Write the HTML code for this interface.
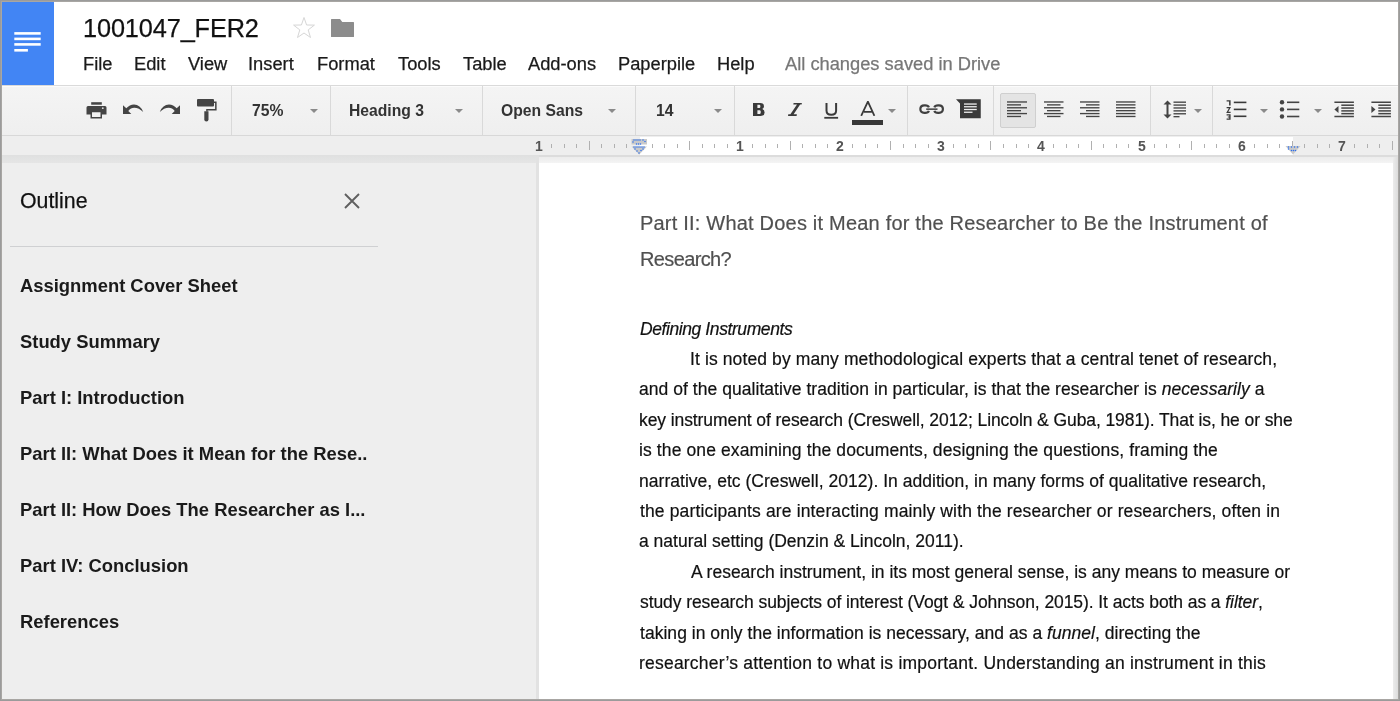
<!DOCTYPE html>
<html><head><meta charset="utf-8">
<style>
*{margin:0;padding:0;box-sizing:border-box}
html,body{width:1400px;height:701px;overflow:hidden;background:#9b9b9b;font-family:"Liberation Sans",sans-serif;position:relative}
.a{position:absolute}
.t{position:absolute;white-space:nowrap;line-height:normal;will-change:transform;-webkit-text-stroke:0.25px currentColor}
.dl{position:absolute;white-space:nowrap;line-height:normal;transform-origin:0 0;will-change:transform;-webkit-text-stroke:0.2px currentColor}
.menu{font-size:18.3px;color:#1a1a1a;top:52.8px}
.sep{position:absolute;top:86px;width:1px;height:49px;background:#d9d9d9}
.tb{will-change:transform;position:absolute;font-weight:bold;font-size:15.7px;color:#333;top:102px}
.arr{position:absolute;top:109px;width:0;height:0;border-left:4px solid transparent;border-right:4px solid transparent;border-top:4px solid #8a8a8a}
.oi{will-change:transform;position:absolute;left:20px;font-weight:bold;font-size:18.4px;color:#1a1a1a;white-space:nowrap}
.tk{position:absolute;width:1px;background:#b0b0b0}
.rn{will-change:transform;position:absolute;top:137.5px;font-size:14px;font-weight:bold;color:#555;width:20px;text-align:center}
</style></head><body>
<!-- frame -->
<div class="a" style="left:1px;top:1px;width:1398px;height:699px;background:#a8a6a3"></div>
<div class="a" style="left:2px;top:2px;width:1396px;height:697px;background:#fff;overflow:hidden"></div>

<!-- header -->
<div class="a" style="left:2px;top:2px;width:52px;height:83px;background:#4285f4">
 <svg width="52" height="83" class="a" style="left:0;top:0">
  <g fill="#fff">
   <rect x="12.3" y="30.1" width="26.4" height="2.6"/>
   <rect x="12.3" y="35.6" width="26.4" height="2.6"/>
   <rect x="12.3" y="41.1" width="26.4" height="2.6"/>
   <rect x="12.3" y="47" width="13.6" height="2.6"/>
  </g>
 </svg>
</div>
<div class="t" style="left:83px;top:14.3px;font-size:25.3px;letter-spacing:-0.12px;color:#111">1001047_FER2</div>
<svg class="a" style="left:292px;top:16px" width="24" height="24" viewBox="0 0 24 24">
 <path d="M12 1.5 L14.6 9 L22.4 9.1 L16.2 13.9 L18.5 21.5 L12 17 L5.5 21.5 L7.8 13.9 L1.6 9.1 L9.4 9 Z" fill="none" stroke="#d6d6d6" stroke-width="1"/>
</svg>
<svg class="a" style="left:331px;top:19px" width="23" height="18" viewBox="0 0 23 18">
 <path d="M0 0.6 Q0 0 0.6 0 L9 0 L11.3 2.9 L22.4 2.9 Q23 2.9 23 3.5 L23 17.4 Q23 18 22.4 18 L0.6 18 Q0 18 0 17.4 Z" fill="#8c8c8c"/>
</svg>
<div class="t menu" style="left:82.5px">File</div>
<div class="t menu" style="left:134px">Edit</div>
<div class="t menu" style="left:188px">View</div>
<div class="t menu" style="left:248px">Insert</div>
<div class="t menu" style="left:317px">Format</div>
<div class="t menu" style="left:398px">Tools</div>
<div class="t menu" style="left:463px">Table</div>
<div class="t menu" style="left:528px">Add-ons</div>
<div class="t menu" style="left:617.5px">Paperpile</div>
<div class="t menu" style="left:716.5px">Help</div>
<div class="t menu" style="left:785px;color:#777">All changes saved in Drive</div>

<!-- toolbar -->
<div class="a" style="left:2px;top:85px;width:1396px;height:1px;background:#dadada"></div>
<div class="a" style="left:2px;top:86px;width:1396px;height:1px;background:#fbfbfb"></div>
<div class="a" style="left:2px;top:87px;width:1396px;height:48px;background:linear-gradient(#f4f4f4,#efefef)"></div>
<div class="a" style="left:2px;top:135px;width:1396px;height:1px;background:#d8d8d8"></div>
<div class="sep" style="left:231px"></div>
<div class="sep" style="left:330px"></div>
<div class="sep" style="left:482px"></div>
<div class="sep" style="left:635px"></div>
<div class="sep" style="left:734px"></div>
<div class="sep" style="left:907px"></div>
<div class="sep" style="left:993px"></div>
<div class="sep" style="left:1150px"></div>
<div class="sep" style="left:1212px"></div>

<!-- print -->
<svg class="a" style="left:86px;top:101px" width="21" height="18" viewBox="0 0 21 18">
 <g fill="#444">
  <rect x="5.2" y="1.2" width="10.6" height="2.5"/>
  <path d="M2 5 L19 5 Q20.5 5 20.5 6.5 L20.5 13.5 L15.5 13.5 L15.5 10 L5.5 10 L5.5 13.5 L0.5 13.5 L0.5 6.5 Q0.5 5 2 5 Z"/>
  <path d="M4.5 9.5 L16 9.5 L16 17.5 L4.5 17.5 Z M6 11.3 L6 16 L14.5 16 L14.5 11.3 Z" fill-rule="evenodd"/>
 </g>
 <circle cx="16.8" cy="7.2" r="0.9" fill="#ddd"/>
</svg>
<!-- undo -->
<svg class="a" style="left:122px;top:103px" width="23" height="13" viewBox="0 0 23 13">
 <path d="M1 2.3 L1 11 L9.3 11 L6.3 8 Q8.8 4.7 12.2 4.7 Q17 4.7 21.2 9 Q18.3 1.5 12 1.5 Q7.6 1.5 4.3 5.3 Z" fill="#444"/>
</svg>
<!-- redo -->
<svg class="a" style="left:158px;top:103px" width="23" height="13" viewBox="0 0 23 13">
 <g transform="translate(23,0) scale(-1,1)">
 <path d="M1 2.3 L1 11 L9.3 11 L6.3 8 Q8.8 4.7 12.2 4.7 Q17 4.7 21.2 9 Q18.3 1.5 12 1.5 Q7.6 1.5 4.3 5.3 Z" fill="#444"/>
 </g>
</svg>
<!-- paint format -->
<svg class="a" style="left:196px;top:98px" width="22" height="24" viewBox="0 0 22 24">
 <g fill="#444">
  <rect x="1" y="1" width="17" height="7.5" rx="1"/>
  <path d="M17.5 3.6 L20.6 3.6 L20.6 12.4 L11.6 12.4 L11.6 13.5 L10.2 13.5 L10.2 11 L19.1 11 L19.1 5 L17.5 5 Z"/>
  <path d="M8.3 13.3 H12.5 V21.5 Q12.5 23.5 10.4 23.5 Q8.3 23.5 8.3 21.5 Z"/>
 </g>
</svg>

<div class="tb" style="left:252px">75%</div>
<div class="arr" style="left:309.5px"></div>
<div class="tb" style="left:349px">Heading 3</div>
<div class="arr" style="left:455px"></div>
<div class="tb" style="left:501px">Open Sans</div>
<div class="arr" style="left:607.5px"></div>
<div class="tb" style="left:656px">14</div>
<div class="arr" style="left:713.5px"></div>

<!-- B I U A -->
<svg class="a" style="left:752.9px;top:102.9px" width="12" height="13" viewBox="0 0 12 13">
 <path fill="#3a3a3a" fill-rule="evenodd" d="M0 0 H7.2 Q11 0 11 3.2 Q11 5.3 9.2 6.1 Q11.6 6.9 11.6 9.4 Q11.6 12.9 7.6 12.9 H0 Z M4.4 1.7 V4.9 H6.6 Q7.4 4.9 7.4 3.3 Q7.4 1.7 6.6 1.7 Z M4.4 7.2 V10.9 H6.8 Q7.8 10.9 7.8 9.05 Q7.8 7.2 6.8 7.2 Z"/>
</svg>
<svg class="a" style="left:787.9px;top:102.9px" width="14" height="13" viewBox="0 0 14 13">
 <path fill="#3a3a3a" d="M5.6 0 H13.9 L13.6 1.6 H12.1 L5.6 11.3 H8.9 L8.6 12.9 H0 L0.3 11.3 H2.4 L9.0 1.6 H5.3 Z"/>
</svg>
<svg class="a" style="left:824px;top:102px" width="15" height="18" viewBox="0 0 15 18">
 <path fill="none" stroke="#3a3a3a" stroke-width="2" d="M2.5 1 V8.5 Q2.5 12.8 7.3 12.8 Q12.1 12.8 12.1 8.5 V1"/>
 <rect x="0.3" y="14.9" width="13.8" height="1.8" fill="#3a3a3a"/>
</svg>
<svg class="a" style="left:860px;top:101px" width="16" height="15" viewBox="0 0 16 15">
 <path fill="none" stroke="#3a3a3a" stroke-width="1.8" d="M1.2 14.8 L7.9 0.6 L14.4 14.8 M4 10.9 H11.8"/>
</svg>
<div class="a" style="left:852.2px;top:120px;width:30.6px;height:5.4px;background:#383838"></div>
<div class="arr" style="left:888.2px"></div>
<!-- link -->
<svg class="a" style="left:919px;top:104px" width="26" height="11" viewBox="0 0 26 11">
 <g fill="none" stroke="#404040" stroke-width="2.2">
  <path d="M9.9 3.4 Q9.2 1.3 6.2 1.3 H5.3 Q1.35 1.3 1.35 5.1 Q1.35 8.8 5.3 8.8 H6.2 Q9.2 8.8 9.9 6.8"/>
  <path d="M15.35 3.4 Q16.05 1.3 19.05 1.3 H19.95 Q23.9 1.3 23.9 5.1 Q23.9 8.8 19.95 8.8 H19.05 Q16.05 8.8 15.35 6.8"/>
 </g>
 <rect x="7.2" y="4.4" width="11.3" height="1.5" fill="#404040"/>
</svg>
<!-- comment -->
<svg class="a" style="left:955px;top:98px" width="27" height="22" viewBox="0 0 27 22">
 <path d="M1 1.25 L25.75 1.25 L25.75 20.25 L5 20.25 L5 5.5 Z" fill="#3a3a3a"/>
 <g fill="#eee">
  <rect x="9" y="5.4" width="12.75" height="1.3"/>
  <rect x="9" y="8.1" width="12.75" height="1.3"/>
  <rect x="9" y="10.85" width="12.75" height="1.3"/>
  <rect x="9" y="13.6" width="8.5" height="1.3"/>
 </g>
</svg>

<!-- align pressed bg -->
<div class="a" style="left:999.5px;top:92.5px;width:36.5px;height:35.5px;background:#e4e4e4;border:1px solid #cfcfcf;border-radius:2px"></div>
<svg class="a" style="left:1006px;top:100px" width="140" height="20" viewBox="0 0 140 20">
 <g fill="#444">
  <!-- left -->
  <rect x="1" y="1.3" width="20" height="1.35"/><rect x="1" y="4.2" width="14" height="1.35"/>
  <rect x="1" y="7.1" width="20" height="1.35"/><rect x="1" y="10" width="14" height="1.35"/>
  <rect x="1" y="12.9" width="20" height="1.35"/><rect x="1" y="15.8" width="14" height="1.35"/>
  <!-- center -->
  <rect x="38" y="1.3" width="19.5" height="1.35"/><rect x="41" y="4.2" width="13.5" height="1.35"/>
  <rect x="38" y="7.1" width="19.5" height="1.35"/><rect x="41" y="10" width="13.5" height="1.35"/>
  <rect x="38" y="12.9" width="19.5" height="1.35"/><rect x="41" y="15.8" width="13.5" height="1.35"/>
  <!-- right -->
  <rect x="74" y="1.3" width="19.5" height="1.35"/><rect x="80" y="4.2" width="13.5" height="1.35"/>
  <rect x="74" y="7.1" width="19.5" height="1.35"/><rect x="80" y="10" width="13.5" height="1.35"/>
  <rect x="74" y="12.9" width="19.5" height="1.35"/><rect x="80" y="15.8" width="13.5" height="1.35"/>
  <!-- justify -->
  <rect x="110" y="1.3" width="19.5" height="1.35"/><rect x="110" y="4.2" width="19.5" height="1.35"/>
  <rect x="110" y="7.1" width="19.5" height="1.35"/><rect x="110" y="10" width="19.5" height="1.35"/>
  <rect x="110" y="12.9" width="19.5" height="1.35"/><rect x="110" y="15.8" width="19.5" height="1.35"/>
 </g>
</svg>
<!-- line spacing -->
<svg class="a" style="left:1162px;top:100px" width="26" height="20" viewBox="0 0 26 20">
 <g fill="#444">
  <path d="M5.5 0.5 L9.5 4.5 L6.5 4.5 L6.5 14.5 L9.5 14.5 L5.5 18.5 L1.5 14.5 L4.5 14.5 L4.5 4.5 L1.5 4.5 Z"/>
  <rect x="11.5" y="1.5" width="12.5" height="1.35"/><rect x="11.5" y="4.4" width="12.5" height="1.35"/>
  <rect x="11.5" y="7.3" width="12.5" height="1.35"/><rect x="11.5" y="10.2" width="12.5" height="1.35"/>
  <rect x="11.5" y="13.1" width="12.5" height="1.35"/><rect x="11.5" y="16" width="6" height="1.35"/>
 </g>
</svg>
<div class="arr" style="left:1194px"></div>
<!-- numbered list -->
<svg class="a" style="left:1226px;top:99px" width="22" height="22" viewBox="0 0 22 22">
 <g fill="#3a3a3a">
  <path d="M0.6 1.3 H4.6 V6.4 H3.1 V2.6 H0.6 Z"/>
  <path d="M0.6 8.7 H3.9 L1.3 13.3 H4.6" fill="none" stroke="#3a3a3a" stroke-width="1.3"/>
  <path d="M0.6 15.3 H4.6 V20.7 H0.6 V19.4 H3.2 V18.6 H1.8 V17.5 H3.2 V16.6 H0.6 Z"/>
  <rect x="7.8" y="2.6" width="12.6" height="1.6"/>
  <rect x="7.8" y="9.6" width="12.6" height="1.6"/>
  <rect x="7.8" y="16.5" width="12.6" height="1.6"/>
 </g>
</svg>
<div class="arr" style="left:1260px"></div>
<!-- bullet list -->
<svg class="a" style="left:1278px;top:99px" width="22" height="22" viewBox="0 0 22 22">
 <g fill="#444">
  <circle cx="4" cy="3.3" r="2.2"/><circle cx="4" cy="10.4" r="2.2"/><circle cx="4" cy="17.5" r="2.2"/>
  <rect x="9" y="2.5" width="12.3" height="1.6"/>
  <rect x="9" y="9.6" width="12.3" height="1.6"/>
  <rect x="9" y="16.7" width="12.3" height="1.6"/>
 </g>
</svg>
<div class="arr" style="left:1313.5px"></div>
<!-- decrease indent -->
<svg class="a" style="left:1333px;top:100px" width="22" height="20" viewBox="0 0 22 20">
 <g fill="#444">
  <rect x="1.4" y="1.5" width="19.5" height="1.5"/>
  <rect x="8.3" y="4.45" width="12.6" height="1.5"/><rect x="8.3" y="7.3" width="12.6" height="1.5"/>
  <rect x="8.3" y="10.15" width="12.6" height="1.5"/><rect x="8.3" y="12.9" width="12.6" height="1.5"/>
  <rect x="1.4" y="15.75" width="19.5" height="1.5"/>
  <path d="M1.4 9.5 L5.5 6 L5.5 13 Z"/>
 </g>
</svg>
<!-- increase indent -->
<svg class="a" style="left:1369.5px;top:100px" width="22" height="20" viewBox="0 0 22 20">
 <g fill="#444">
  <rect x="1.4" y="1.5" width="19.5" height="1.5"/>
  <rect x="8.3" y="4.45" width="12.6" height="1.5"/><rect x="8.3" y="7.3" width="12.6" height="1.5"/>
  <rect x="8.3" y="10.15" width="12.6" height="1.5"/><rect x="8.3" y="12.9" width="12.6" height="1.5"/>
  <rect x="1.4" y="15.75" width="19.5" height="1.5"/>
  <path d="M5.5 9.5 L1.4 6 L1.4 13 Z"/>
 </g>
</svg>

<!-- ruler -->
<div class="a" style="left:2px;top:136px;width:1396px;height:19px;background:#eeeeee"></div>
<div class="a" style="left:640px;top:137px;width:653px;height:18px;background:#fff"></div>
<div class="tk" style="left:551.15px;top:144px;height:4px"></div>
<div class="tk" style="left:563.70px;top:144px;height:4px"></div>
<div class="tk" style="left:576.25px;top:144px;height:4px"></div>
<div class="tk" style="left:588.80px;top:141px;height:9px"></div>
<div class="tk" style="left:601.35px;top:144px;height:4px"></div>
<div class="tk" style="left:613.90px;top:144px;height:4px"></div>
<div class="tk" style="left:626.45px;top:144px;height:4px"></div>
<div class="tk" style="left:651.55px;top:144px;height:4px"></div>
<div class="tk" style="left:664.10px;top:144px;height:4px"></div>
<div class="tk" style="left:676.65px;top:144px;height:4px"></div>
<div class="tk" style="left:689.20px;top:141px;height:9px"></div>
<div class="tk" style="left:701.75px;top:144px;height:4px"></div>
<div class="tk" style="left:714.30px;top:144px;height:4px"></div>
<div class="tk" style="left:726.85px;top:144px;height:4px"></div>
<div class="tk" style="left:751.95px;top:144px;height:4px"></div>
<div class="tk" style="left:764.50px;top:144px;height:4px"></div>
<div class="tk" style="left:777.05px;top:144px;height:4px"></div>
<div class="tk" style="left:789.60px;top:141px;height:9px"></div>
<div class="tk" style="left:802.15px;top:144px;height:4px"></div>
<div class="tk" style="left:814.70px;top:144px;height:4px"></div>
<div class="tk" style="left:827.25px;top:144px;height:4px"></div>
<div class="tk" style="left:852.35px;top:144px;height:4px"></div>
<div class="tk" style="left:864.90px;top:144px;height:4px"></div>
<div class="tk" style="left:877.45px;top:144px;height:4px"></div>
<div class="tk" style="left:890.00px;top:141px;height:9px"></div>
<div class="tk" style="left:902.55px;top:144px;height:4px"></div>
<div class="tk" style="left:915.10px;top:144px;height:4px"></div>
<div class="tk" style="left:927.65px;top:144px;height:4px"></div>
<div class="tk" style="left:952.75px;top:144px;height:4px"></div>
<div class="tk" style="left:965.30px;top:144px;height:4px"></div>
<div class="tk" style="left:977.85px;top:144px;height:4px"></div>
<div class="tk" style="left:990.40px;top:141px;height:9px"></div>
<div class="tk" style="left:1002.95px;top:144px;height:4px"></div>
<div class="tk" style="left:1015.50px;top:144px;height:4px"></div>
<div class="tk" style="left:1028.05px;top:144px;height:4px"></div>
<div class="tk" style="left:1053.15px;top:144px;height:4px"></div>
<div class="tk" style="left:1065.70px;top:144px;height:4px"></div>
<div class="tk" style="left:1078.25px;top:144px;height:4px"></div>
<div class="tk" style="left:1090.80px;top:141px;height:9px"></div>
<div class="tk" style="left:1103.35px;top:144px;height:4px"></div>
<div class="tk" style="left:1115.90px;top:144px;height:4px"></div>
<div class="tk" style="left:1128.45px;top:144px;height:4px"></div>
<div class="tk" style="left:1153.55px;top:144px;height:4px"></div>
<div class="tk" style="left:1166.10px;top:144px;height:4px"></div>
<div class="tk" style="left:1178.65px;top:144px;height:4px"></div>
<div class="tk" style="left:1191.20px;top:141px;height:9px"></div>
<div class="tk" style="left:1203.75px;top:144px;height:4px"></div>
<div class="tk" style="left:1216.30px;top:144px;height:4px"></div>
<div class="tk" style="left:1228.85px;top:144px;height:4px"></div>
<div class="tk" style="left:1253.95px;top:144px;height:4px"></div>
<div class="tk" style="left:1266.50px;top:144px;height:4px"></div>
<div class="tk" style="left:1279.05px;top:144px;height:4px"></div>
<div class="tk" style="left:1291.60px;top:141px;height:9px"></div>
<div class="tk" style="left:1304.15px;top:144px;height:4px"></div>
<div class="tk" style="left:1316.70px;top:144px;height:4px"></div>
<div class="tk" style="left:1329.25px;top:144px;height:4px"></div>
<div class="tk" style="left:1354.35px;top:144px;height:4px"></div>
<div class="tk" style="left:1366.90px;top:144px;height:4px"></div>
<div class="tk" style="left:1379.45px;top:144px;height:4px"></div>
<div class="tk" style="left:1392.00px;top:141px;height:9px"></div>
<div class="rn" style="left:529.10px">1</div>
<div class="rn" style="left:729.90px">1</div>
<div class="rn" style="left:830.30px">2</div>
<div class="rn" style="left:930.70px">3</div>
<div class="rn" style="left:1031.10px">4</div>
<div class="rn" style="left:1131.50px">5</div>
<div class="rn" style="left:1231.90px">6</div>
<div class="rn" style="left:1332.30px">7</div>
<svg class="a" style="left:631px;top:138px" width="17" height="18" viewBox="0 0 17 18"><rect x="0.5" y="1" width="15.5" height="5.5" fill="#c9c9c9"/><path d="M0.5 8.5 L16 8.5 L8.25 16.5 Z" fill="#c9c9c9"/><g fill="#2a6ef0"><circle cx="3" cy="2" r="0.75"/><circle cx="5" cy="2" r="0.75"/><circle cx="7" cy="2" r="0.75"/><circle cx="9" cy="2" r="0.75"/><circle cx="12" cy="2" r="0.75"/><circle cx="2" cy="4" r="0.75"/><circle cx="14" cy="3.5" r="0.75"/><circle cx="5.5" cy="6" r="0.75"/><circle cx="7.5" cy="6" r="0.75"/><circle cx="9.5" cy="6" r="0.75"/><circle cx="3" cy="9" r="0.75"/><circle cx="5" cy="9" r="0.75"/><circle cx="7" cy="9" r="0.75"/><circle cx="9" cy="9" r="0.75"/><circle cx="11" cy="9" r="0.75"/><circle cx="13" cy="9" r="0.75"/><circle cx="4" cy="11" r="0.75"/><circle cx="12" cy="11" r="0.75"/><circle cx="6" cy="13" r="0.75"/><circle cx="10" cy="12.5" r="0.75"/><circle cx="8" cy="15" r="0.75"/></g></svg>
<svg class="a" style="left:1285px;top:145px" width="16" height="10" viewBox="0 0 16 10"><path d="M0.5 1 L15.5 1 L8 9.5 Z" fill="#c9c9c9"/><g fill="#2a6ef0"><circle cx="3.5" cy="2" r="0.75"/><circle cx="6.5" cy="2" r="0.75"/><circle cx="9.5" cy="2" r="0.75"/><circle cx="12.5" cy="2" r="0.75"/><circle cx="3.5" cy="4" r="0.75"/><circle cx="6.5" cy="5.5" r="0.75"/><circle cx="8.5" cy="5.5" r="0.75"/><circle cx="10.5" cy="5.5" r="0.75"/></g></svg>
<!-- ruler bottom / shadow -->
<div class="a" style="left:2px;top:155px;width:1396px;height:2px;background:#dcdcdc"></div>
<div class="a" style="left:539px;top:157px;width:859px;height:6px;background:linear-gradient(#ececec,#f4f4f4)"></div>
<div class="a" style="left:2px;top:155px;width:537px;height:8px;background:linear-gradient(#dfe0e0,#e5e5e5)"></div>

<!-- sidebar -->
<div class="a" style="left:2px;top:163px;width:534px;height:536px;background:#eeeeee"></div>
<div class="a" style="left:536px;top:157px;width:3px;height:542px;background:#e2e2e2"></div>
<div class="t" style="left:20.3px;top:188.5px;font-size:21.3px;color:#111">Outline</div>
<svg class="a" style="left:343px;top:192px" width="18" height="18" viewBox="0 0 18 18">
 <path d="M2 2 L16 16 M16 2 L2 16" stroke="#5f5f5f" stroke-width="1.9"/>
</svg>
<div class="a" style="left:10px;top:246px;width:368px;height:1px;background:#cfd0d2"></div>
<div class="oi" style="top:274.5px">Assignment Cover Sheet</div>
<div class="oi" style="top:330.5px">Study Summary</div>
<div class="oi" style="top:386.5px">Part I: Introduction</div>
<div class="oi" style="top:442.5px">Part II: What Does it Mean for the Rese..</div>
<div class="oi" style="top:498.5px">Part II: How Does The Researcher as I...</div>
<div class="oi" style="top:554.5px">Part IV: Conclusion</div>
<div class="oi" style="top:610.5px">References</div>

<!-- doc -->
<div class="a" style="left:539px;top:163px;width:854px;height:536px;background:#fff"></div>
<div class="a" style="left:1393px;top:157px;width:5px;height:542px;background:linear-gradient(90deg,#ececec,#dcdcdc)"></div>
<div class="dl" style="left:640.00px;top:211.60px;font-size:20.0px;color:#505050;letter-spacing:0.2059px">Part II: What Does it Mean for the Researcher to Be the Instrument of</div>
<div class="dl" style="left:640.00px;top:247.60px;font-size:20.0px;color:#505050;letter-spacing:-0.6250px">Research?</div>
<div class="dl" style="left:640.00px;top:319.16px;font-size:17.5px;color:#111;letter-spacing:-0.4105px"><i>Defining Instruments</i></div>
<div class="dl" style="left:690.00px;top:348.96px;font-size:17.5px;color:#111;letter-spacing:0.1093px">It is noted by many methodological experts that a central tenet of research,</div>
<div class="dl" style="left:639.00px;top:379.36px;font-size:17.5px;color:#111;letter-spacing:0.0442px">and of the qualitative tradition in particular, is that the researcher is <i>necessarily</i> a</div>
<div class="dl" style="left:639.00px;top:409.76px;font-size:17.5px;color:#111;letter-spacing:-0.0881px">key instrument of research (Creswell, 2012; Lincoln &amp; Guba, 1981). That is, he or she</div>
<div class="dl" style="left:639.00px;top:440.16px;font-size:17.5px;color:#111;letter-spacing:0.1099px">is the one examining the documents, designing the questions, framing the</div>
<div class="dl" style="left:639.00px;top:470.56px;font-size:17.5px;color:#111;letter-spacing:0.0313px">narrative, etc (Creswell, 2012). In addition, in many forms of qualitative research,</div>
<div class="dl" style="left:640.00px;top:500.96px;font-size:17.5px;color:#111;letter-spacing:0.1398px">the participants are interacting mainly with the researcher or researchers, often in</div>
<div class="dl" style="left:639.00px;top:531.36px;font-size:17.5px;color:#111;letter-spacing:0.0000px">a natural setting (Denzin &amp; Lincoln, 2011).</div>
<div class="dl" style="left:691.00px;top:561.76px;font-size:17.5px;color:#111;letter-spacing:0.0000px">A research instrument, in its most general sense, is any means to measure or</div>
<div class="dl" style="left:640.00px;top:592.16px;font-size:17.5px;color:#111;letter-spacing:-0.0786px">study research subjects of interest (Vogt &amp; Johnson, 2015). It acts both as a <i>filter</i>,</div>
<div class="dl" style="left:640.00px;top:622.56px;font-size:17.5px;color:#111;letter-spacing:0.0324px">taking in only the information is necessary, and as a <i>funnel</i>, directing the</div>
<div class="dl" style="left:639.00px;top:652.96px;font-size:17.5px;color:#111;letter-spacing:0.2101px">researcher’s attention to what is important. Understanding an instrument in this</div>
</body></html>
